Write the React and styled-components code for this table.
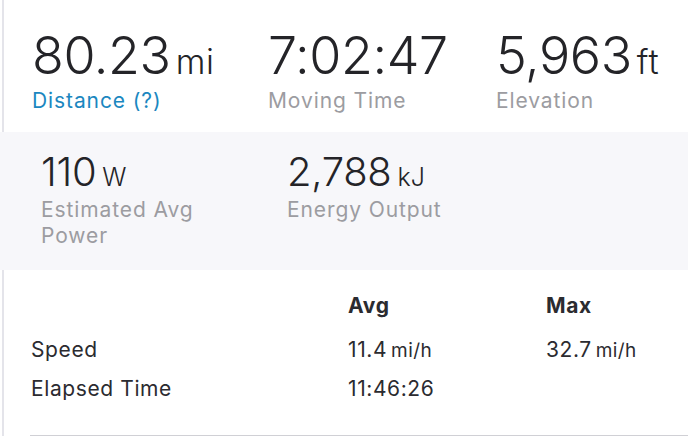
import React from 'react';
import styled, { createGlobalStyle } from 'styled-components';

const GlobalStyle = createGlobalStyle`
  html, body {
    margin: 0;
    padding: 0;
    background: #fff;
  }
  body {
    font-family: Inter, "Helvetica Neue", Arial, sans-serif;
    color: #2b2b30;
    -webkit-font-smoothing: antialiased;
  }
`;

const Page = styled.div`
  width: 688px;
  height: 436px;
  overflow: hidden;
`;

const Section = styled.section`
  margin-left: 2px;
  border-left: 2px solid #e4e4ea;
`;

const TopStats = styled(Section)`
  display: grid;
  grid-template-columns: 236px 228px 1fr;
  height: 132px;
  box-sizing: border-box;
  padding: 28px 0 0 28px;
`;

const Stat = styled.div`
  display: flex;
  flex-direction: column;
`;

const Value = styled.div`
  display: flex;
  align-items: baseline;
  font-weight: 300;
  font-size: ${(p) => (p.$small ? '40px' : '52px')};
  line-height: ${(p) => (p.$small ? '40px' : '56px')};
  height: ${(p) => (p.$small ? '40px' : '56px')};
  letter-spacing: ${(p) => (p.$small ? '-0.3px' : '-0.4px')};
  color: #242428;
`;

const Unit = styled.abbr`
  font-size: ${(p) => (p.$small ? '25px' : '34px')};
  line-height: 1;
  letter-spacing: ${(p) => (p.$small ? '0' : '0.6px')};
  margin-left: ${(p) => (p.$small ? '6px' : '5px')};
  text-decoration: none;
`;

const Label = styled.div`
  font-size: 21px;
  line-height: 26px;
  letter-spacing: 0.9px;
  margin-top: ${(p) => p.$gap || '4px'};
  color: ${(p) => (p.$link ? '#1b87c0' : '#9c9ca1')};
  max-width: ${(p) => p.$max || 'none'};
`;

const Panel = styled.section`
  display: grid;
  grid-template-columns: 246px 1fr;
  height: 138px;
  box-sizing: border-box;
  padding: 20px 0 0 41px;
  background: #f7f7fa;
`;

const TableSection = styled(Section)`
  height: 166px;
  box-sizing: border-box;
  padding: 24px 0 0 26px;
`;

const Table = styled.div`
  display: grid;
  grid-template-columns: 318px 198px 1fr;
  border-bottom: 2px solid #d0d0d5;
  padding-bottom: 20px;
`;

const Cell = styled.div`
  font-size: 21px;
  line-height: 24px;
  letter-spacing: 0.6px;
  font-weight: ${(p) => (p.$head ? 700 : 400)};
  color: #2b2b30;
  padding-left: ${(p) => (p.$first ? '1px' : '0')};
  margin-bottom: ${(p) => (p.$head ? '20px' : '14px')};
`;

const CellUnit = styled.span`
  font-size: 19px;
  letter-spacing: 0.4px;
  margin-left: 4px;
`;

const top = [
  { value: '80.23', unit: 'mi', label: 'Distance (?)', link: true },
  { value: '7:02:47', label: 'Moving Time' },
  { value: '5,963', unit: 'ft', label: 'Elevation' },
];

const power = [
  { value: '110', unit: 'W', label: 'Estimated Avg Power' },
  { value: '2,788', unit: 'kJ', label: 'Energy Output' },
];

const rows = [
  { name: 'Speed', avg: ['11.4', 'mi/h'], max: ['32.7', 'mi/h'] },
  { name: 'Elapsed Time', avg: ['11:46:26'], max: null },
];

const Amount = ({ pair }) => (
  <>
    {pair[0]}
    {pair[1] && <CellUnit>{pair[1]}</CellUnit>}
  </>
);

export default function App() {
  return (
    <Page>
      <GlobalStyle />
      <TopStats>
        {top.map((s) => (
          <Stat key={s.label}>
            <Value>
              {s.value}
              {s.unit && <Unit>{s.unit}</Unit>}
            </Value>
            <Label $link={s.link}>{s.label}</Label>
          </Stat>
        ))}
      </TopStats>
      <Panel>
        {power.map((s) => (
          <Stat key={s.label}>
            <Value $small>
              {s.value}
              <Unit $small>{s.unit}</Unit>
            </Value>
            <Label $max="190px" $gap="5px">{s.label}</Label>
          </Stat>
        ))}
      </Panel>
      <TableSection>
        <Table>
          <Cell $head />
          <Cell $head>Avg</Cell>
          <Cell $head>Max</Cell>
          {rows.map((r) => (
            <React.Fragment key={r.name}>
              <Cell $first>{r.name}</Cell>
              <Cell><Amount pair={r.avg} /></Cell>
              <Cell>{r.max && <Amount pair={r.max} />}</Cell>
            </React.Fragment>
          ))}
        </Table>
      </TableSection>
    </Page>
  );
}
